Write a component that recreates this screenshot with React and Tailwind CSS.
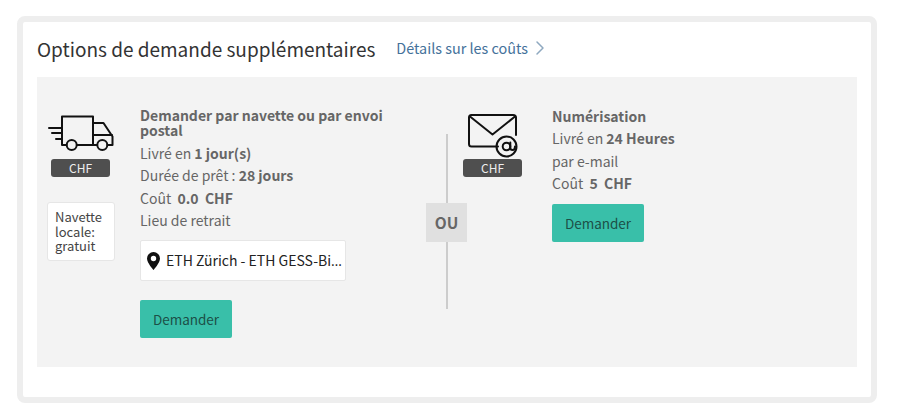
import { ChevronRight } from 'lucide-react';

function TruckIcon() {
  return (
    <svg width="66" height="36" viewBox="0 0 66 36" fill="none" stroke="#111" strokeWidth="2" strokeLinejoin="round" strokeLinecap="round">
      <path d="M18.500 30H14V1.500H45V30H29" />
      <path d="M45 8H55.500L64.500 21.500V30H59.500" />
      <path d="M45 30H49" />
      <path d="M45 20H64" />
      <circle cx="23.700" cy="30" r="5" />
      <circle cx="54.300" cy="30" r="5" />
      <path d="M1 13H13M4 18H13M8 24H13" />
    </svg>
  );
}

function MailIcon() {
  return (
    <svg width="52" height="44" viewBox="0 0 52 44" fill="none" stroke="#111" strokeWidth="2" strokeLinejoin="round" strokeLinecap="round">
      <path d="M30 32.500H3.500Q1 32.500 1 30V3.500Q1 1 3.500 1H45Q48 1 48 3.500V21" />
      <path d="M2 2.500L24.500 20.500L47 2.500" />
      <circle cx="38.500" cy="32.500" r="10" />
      <circle cx="38.500" cy="32.500" r="3.800" />
      <path d="M42.300 28.500V33.500Q42.300 36 44.500 36Q47 36 47 32.500" />
    </svg>
  );
}

function ChfBadge() {
  return (
    <div className="flex h-[18px] w-[59px] items-center justify-center rounded-[3px] bg-[#4f4f4f] text-[12px] leading-none text-[#eee]">
      CHF
    </div>
  );
}

function PinIcon() {
  return (
    <svg className="shrink-0" width="13" height="18" viewBox="0 0 13 18">
      <path
        fillRule="evenodd"
        fill="#111"
        d="M6.500 0A6.500 6.500 0 0 0 0 6.500C0 11 6.500 18 6.500 18S13 11 13 6.500A6.500 6.500 0 0 0 6.500 0ZM6.500 3.800A2.700 2.700 0 1 1 6.500 9.200A2.700 2.700 0 0 1 6.500 3.800Z"
      />
    </svg>
  );
}

function RequestButton() {
  return (
    <button
      type="button"
      className="flex h-[38px] w-[92px] items-center justify-center rounded-[2px] bg-[#39bfa9] text-[13.500px] text-[#1c4f47]"
    >
      Demander
    </button>
  );
}

export default function App() {
  return (
    <div className="h-[418px] w-[897px] overflow-hidden bg-white pl-[17px] pt-[16px] font-['Noto_Sans_CJK_KR','Open_Sans',sans-serif] text-[#666]">
      <div className="h-[387px] w-[860px] rounded-[8px] border-[6px] border-[#eeeeee] px-[14px]">
        <div className="flex h-[55px] items-center pb-[3px]">
          <h2 className="text-[19px] leading-none text-[#333]">Options de demande supplémentaires</h2>
          <a className="ml-[21px] flex items-center text-[14.400px] leading-none text-[#44719a]">
            Détails sur les coûts
            <ChevronRight className="text-[#8fa9c0]" size={24} strokeWidth={1.500} />
          </a>
        </div>

        <div className="flex h-[290px] w-[820px] bg-[#f3f3f3]">
          <div className="flex w-[103px] flex-col items-start pt-[38px]">
            <div className="ml-[11px]">
              <TruckIcon />
            </div>
            <div className="ml-[14px] mt-[8px]">
              <ChfBadge />
            </div>
            <div className="ml-[10px] mt-[25px] h-[59px] w-[68px] rounded-[3px] border border-[#e6e6e6] bg-white pl-[7px] pt-[7px] text-[13px] leading-[14.500px] text-[#444]">
              Navette locale: gratuit
            </div>
          </div>

          <div className="w-[286px] pt-[31px] text-[14px]">
            <div className="w-[250px] font-bold leading-[15px]">Demander par navette ou par envoi postal</div>
            <div className="mt-[4px] leading-[22.300px]">
              Livré en <b>1 jour(s)</b>
            </div>
            <div className="leading-[22.300px]">
              Durée de prêt : <b>28 jours</b>
            </div>
            <div className="leading-[22.300px]">
              Coût&nbsp; <b>0.0&nbsp; CHF</b>
            </div>
            <div className="leading-[22.300px]">Lieu de retrait</div>
            <div className="mt-[9px] flex h-[41px] w-[206px] items-center rounded-[2px] border border-[#e6e6e6] bg-white pl-[6px] pr-[2px] text-[#222]">
              <PinIcon />
              {/* outer font only decides the ellipsis glyph, CJK one sits mid-line */}
              <span className="ml-[6px] truncate font-['Open_Sans',sans-serif]">
                <span className="font-['Noto_Sans_CJK_KR',sans-serif]">ETH Zürich - ETH GESS-Bibliothek</span>
              </span>
            </div>
            <div className="mt-[19px]">
              <RequestButton />
            </div>
          </div>

          <div className="relative flex w-[41px] flex-col items-center pt-[57px]">
            <div className="h-[175px] w-[2px] bg-[#cccccc]" />
            <div className="absolute top-[126px] flex h-[39px] w-[41px] items-center justify-center bg-[#e0e0e0] text-[15.500px] font-bold text-[#666]">
              OU
            </div>
          </div>

          <div className="-ml-[4px] flex w-[89px] flex-col items-start pt-[37px]">
            <div className="ml-[5px]">
              <MailIcon />
            </div>
            <div className="mt-[1px]">
              <ChfBadge />
            </div>
          </div>

          <div className="pt-[28px] text-[14px]">
            <div className="font-bold leading-[22.300px]">Numérisation</div>
            <div className="leading-[22.300px]">
              Livré en <b>24 Heures</b>
            </div>
            <div className="leading-[22.300px]">par e-mail</div>
            <div className="leading-[22.300px]">
              Coût&nbsp; <b>5&nbsp; CHF</b>
            </div>
            <div className="mt-[10px]">
              <RequestButton />
            </div>
          </div>
        </div>
      </div>
    </div>
  );
}
